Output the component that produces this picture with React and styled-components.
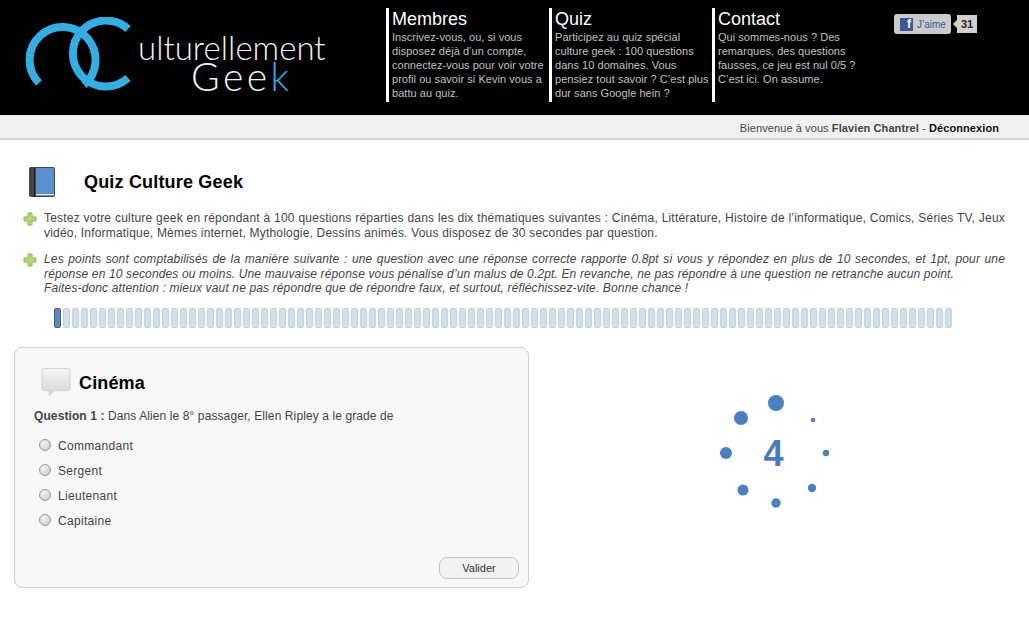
import React from "react";
import styled, { createGlobalStyle } from "styled-components";

const GlobalStyle = createGlobalStyle`
  html, body {
    margin: 0;
    padding: 0;
    background: #fff;
    font-family: "Liberation Sans", Arial, sans-serif;
    font-size: 12px;
    color: #444;
  }
  * { box-sizing: border-box; }
`;

const columns = [
  {
    title: "Membres",
    text: "Inscrivez-vous, ou, si vous disposez déjà d’un compte, connectez-vous pour voir votre profil ou savoir si Kevin vous a battu au quiz.",
  },
  {
    title: "Quiz",
    text: "Participez au quiz spécial culture geek : 100 questions dans 10 domaines. Vous pensiez tout savoir ? C’est plus dur sans Google hein ?",
  },
  {
    title: "Contact",
    text: "Qui sommes-nous ? Des remarques, des questions fausses, ce jeu est nul 0/5 ? C’est ici. On assume.",
  },
];

const answers = ["Commandant", "Sergent", "Lieutenant", "Capitaine"];

const dots = [
  [776, 403, 8],
  [741, 418, 7],
  [726, 453, 6],
  [743, 490, 5.5],
  [776, 503, 4.7],
  [812, 488, 4.2],
  [826, 453, 3.2],
  [813, 420, 2.3],
];

function PlusIcon() {
  return (
    <svg width="14" height="14" viewBox="0 0 14 14">
      <path
        d="M5 1h4v4h4v4H9v4H5V9H1V5h4z"
        fill="#b5d67a"
        stroke="#8fb45c"
        strokeWidth="1"
        strokeLinejoin="round"
      />
    </svg>
  );
}

function BookIcon() {
  return (
    <svg width="26" height="30" viewBox="0 0 26 30">
      <rect x="0" y="0" width="26" height="30" rx="2" fill="#444" />
      <rect x="7" y="1" width="18" height="26" fill="#5a90cc" />
      <rect x="7" y="27" width="18" height="1.5" fill="#e4e4e4" />
      <rect x="5" y="0" width="1" height="30" fill="#222" />
    </svg>
  );
}

function BubbleIcon() {
  return (
    <svg width="30" height="29" viewBox="0 0 30 30">
      <defs>
        <linearGradient id="bubble" x1="0" y1="0" x2="0" y2="1">
          <stop offset="0" stopColor="#f4f4f4" />
          <stop offset="1" stopColor="#d4d6d4" />
        </linearGradient>
      </defs>
      <path
        d="M3 0.5h24a2.5 2.5 0 0 1 2.5 2.5v18a2.5 2.5 0 0 1-2.5 2.5H13l-5 5v-5H3A2.5 2.5 0 0 1 .5 21V3A2.5 2.5 0 0 1 3 .5z"
        fill="url(#bubble)"
        stroke="#cfcfcf"
      />
    </svg>
  );
}

function LogoMark() {
  return (
    <svg width="108" height="76" viewBox="0 0 108 76">
      <path
        d="M15 66 A33 33 0 1 1 60 68"
        fill="none"
        stroke="#35ade3"
        strokeWidth="8"
      />
      <path
        d="M104 12 A33 33 0 1 0 104 61"
        fill="none"
        stroke="#35ade3"
        strokeWidth="8"
      />
    </svg>
  );
}

export default function App() {
  return (
    <>
      <GlobalStyle />
      <Header>
        <Logo>
          <LogoMark />
          <LogoText>
            <LogoLine>ulturellement</LogoLine>
            <LogoGeek>
              Gee<span>k</span>
            </LogoGeek>
          </LogoText>
        </Logo>
        {columns.map(({ title, text }) => (
          <NavColumn key={title}>
            <h2>{title}</h2>
            <p>{text}</p>
          </NavColumn>
        ))}
        <Like>
          <LikeButton>
            <FbSquare>f</FbSquare>
            J’aime
          </LikeButton>
          <LikeCount>31</LikeCount>
        </Like>
      </Header>
      <UserBar>
        Bienvenue à vous <strong>Flavien Chantrel</strong> - <b>Déconnexion</b>
      </UserBar>
      <Main>
        <PageTitle>
          <BookIcon />
          <h1>Quiz Culture Geek</h1>
        </PageTitle>
        <Notes>
          <Note>
            <PlusIcon />
            <p>
              Testez votre culture geek en répondant à 100 questions réparties
              dans les dix thématiques suivantes : Cinéma, Littérature, Histoire
              de l’informatique, Comics, Séries TV, Jeux vidéo, Informatique,
              Mèmes internet, Mythologie, Dessins animés. Vous disposez de 30
              secondes par question.
            </p>
          </Note>
          <Note $italic>
            <PlusIcon />
            <p>
              Les points sont comptabilisés de la manière suivante : une question
              avec une réponse correcte rapporte 0.8pt si vous y répondez en plus
              de 10 secondes, et 1pt, pour une réponse en 10 secondes ou moins.
              Une mauvaise réponse vous pénalise d’un malus de 0.2pt. En revanche,
              ne pas répondre à une question ne retranche aucun point.
              <br />
              Faites-donc attention : mieux vaut ne pas répondre que de répondre
              faux, et surtout, réfléchissez-vite. Bonne chance !
            </p>
          </Note>
        </Notes>
        <Progress>
          {Array.from({ length: 100 }, (_, i) => (
            <Step key={i} $active={i === 0} />
          ))}
        </Progress>
        <QuizRow>
          <Card>
            <CardTitle>
              <BubbleIcon />
              <h2>Cinéma</h2>
            </CardTitle>
            <Question>
              <strong>Question 1 :</strong> Dans Alien le 8° passager, Ellen
              Ripley a le grade de
            </Question>
            <Answers>
              {answers.map((answer) => (
                <Answer key={answer}>
                  <Radio />
                  {answer}
                </Answer>
              ))}
            </Answers>
            <CardFooter>
              <Submit type="button">Valider</Submit>
            </CardFooter>
          </Card>
          <Timer>
            <svg width="120" height="120" viewBox="716 393 120 120">
              {dots.map(([cx, cy, r]) => (
                <circle key={cx + "-" + cy} cx={cx} cy={cy} r={r} fill="#4a80bd" />
              ))}
            </svg>
            <TimerValue>4</TimerValue>
          </Timer>
        </QuizRow>
      </Main>
    </>
  );
}

const Header = styled.header`
  display: flex;
  align-items: flex-start;
  height: 115px;
  padding-top: 8px;
  background: #000;
`;

const Logo = styled.div`
  display: flex;
  align-items: flex-start;
  width: 386px;
  padding: 9px 0 0 24px;
`;

const LogoText = styled.div`
  display: flex;
  flex-direction: column;
  align-items: flex-start;
  margin-left: 6px;
  padding-top: 16px;
  font-family: "Lato", "Liberation Sans", sans-serif;
  font-weight: 300;
  color: #f2f2f2;
`;

const LogoLine = styled.div`
  font-size: 33px;
  line-height: 28px;
`;

const LogoGeek = styled.div`
  margin-left: 53px;
  font-size: 39px;
  line-height: 30px;
  letter-spacing: 3.5px;

  & span {
    color: #35ade3;
  }
`;

const NavColumn = styled.div`
  width: 163px;
  height: 94px;
  padding-left: 3px;
  padding-right: 0;
  border-left: 3px solid #fff;

  & h2 {
    margin: 0;
    font-size: 18px;
    font-weight: normal;
    line-height: 22px;
    color: #fff;
  }

  & p {
    margin: 0;
    font-size: 11px;
    line-height: 14px;
    letter-spacing: 0.04px;
    color: #c0c0c0;
  }
`;

const Like = styled.div`
  display: flex;
  align-items: center;
  margin: 6px 0 0 19px;
`;

const LikeButton = styled.div`
  display: flex;
  align-items: center;
  gap: 4px;
  width: 57px;
  height: 20px;
  padding-left: 6px;
  border-radius: 3px;
  background: #cbcbcb;
  font-size: 10px;
  color: #3b5998;
`;

const FbSquare = styled.span`
  display: flex;
  align-items: flex-end;
  justify-content: flex-end;
  width: 13px;
  height: 13px;
  padding-right: 2px;
  background: #3b5998;
  font-size: 12px;
  font-weight: bold;
  line-height: 13px;
  color: #fff;
`;

const LikeCount = styled.div`
  position: relative;
  width: 20px;
  height: 18px;
  margin-left: 6px;
  background: #d0d0d0;
  font-size: 11px;
  font-weight: bold;
  line-height: 18px;
  text-align: center;
  color: #222;

  &::before {
    content: "";
    position: absolute;
    top: 5px;
    left: -4px;
    border-style: solid;
    border-width: 4px 4px 4px 0;
    border-color: transparent #d0d0d0 transparent transparent;
  }
`;

const UserBar = styled.div`
  height: 25px;
  padding: 6px 30px 0 0;
  background: #f1f1f1;
  border-bottom: 2px solid #d6d6d6;
  font-size: 11px;
  line-height: 14px;
  letter-spacing: 0.09px;
  text-align: right;
  color: #444;

  & strong {
    color: #444;
  }

  & b {
    color: #111;
  }
`;

const Main = styled.main`
  padding: 27px 0 0 14px;
`;

const PageTitle = styled.div`
  display: flex;
  align-items: center;
  height: 30px;
  padding-left: 15px;

  & h1 {
    margin: 0 0 0 29px;
    font-size: 18px;
    line-height: 30px;
    letter-spacing: 0.18px;
    color: #000;
  }
`;

const Notes = styled.div`
  display: flex;
  flex-direction: column;
  gap: 12px;
  margin-top: 14px;
  padding: 0 24px 0 9px;
`;

const Note = styled.div`
  display: flex;
  align-items: flex-start;
  gap: 7px;
  font-style: ${(props) => (props.$italic ? "italic" : "normal")};

  & svg {
    flex-shrink: 0;
    margin-top: 1px;
  }

  & p {
    margin: 0;
    font-size: 12px;
    line-height: 14.5px;
    letter-spacing: ${(props) => (props.$italic ? "0.14px" : "0.2px")};
    text-align: justify;
    color: #444;
  }
`;

const Progress = styled.div`
  display: flex;
  gap: 2px;
  margin: 12px 0 0 40px;
`;

const Step = styled.span`
  width: 7px;
  height: 20px;
  border-radius: 2px;
  border: 1px solid ${(props) => (props.$active ? "#3f5f85" : "#c6d3de")};
  background: ${(props) => (props.$active ? "#5b8bbd" : "#d3e0ea")};
`;

const QuizRow = styled.div`
  display: flex;
  align-items: flex-start;
  margin-top: 19px;
`;

const Card = styled.section`
  width: 515px;
  height: 241px;
  padding: 20px 9px 0 19px;
  border: 1px solid #cfcfcf;
  border-radius: 8px;
  background: #f8f8f8;
`;

const CardTitle = styled.div`
  display: flex;
  align-items: center;
  padding-left: 7px;

  & h2 {
    margin: 0 0 0 8px;
    font-size: 18px;
    line-height: 30px;
    letter-spacing: 0.15px;
    color: #000;
  }
`;

const Question = styled.p`
  margin: 11px 0 0;
  font-size: 12px;
  line-height: 15px;
  letter-spacing: 0.1px;
  color: #444;
`;

const Answers = styled.ul`
  display: flex;
  flex-direction: column;
  gap: 10px;
  margin: 15px 0 0;
  padding: 0 0 0 5px;
  list-style: none;
`;

const Answer = styled.li`
  display: flex;
  align-items: center;
  gap: 7px;
  height: 15px;
  font-size: 12px;
  letter-spacing: 0.3px;
  color: #444;
`;

const Radio = styled.span`
  width: 12px;
  height: 12px;
  margin-top: -3px;
  border-radius: 50%;
  border: 1px solid #9a9a9a;
  background: radial-gradient(circle at 35% 30%, #f4f4f4, #c6c6c6);
`;

const CardFooter = styled.div`
  display: flex;
  justify-content: flex-end;
  margin-top: 28px;
`;

const Submit = styled.button`
  width: 80px;
  height: 22px;
  padding: 0;
  border: 1px solid #c4c4c4;
  border-radius: 8px;
  background: #f2f2f2;
  font-family: inherit;
  font-size: 11px;
  color: #333;
`;

const Timer = styled.div`
  position: relative;
  width: 120px;
  height: 120px;
  margin: 46px 0 0 187px;
`;

const TimerValue = styled.span`
  position: absolute;
  inset: 0;
  display: flex;
  align-items: center;
  justify-content: center;
  padding: 3px 5px 0 0;
  font-size: 36px;
  font-weight: bold;
  color: #4a7db5;
`;
